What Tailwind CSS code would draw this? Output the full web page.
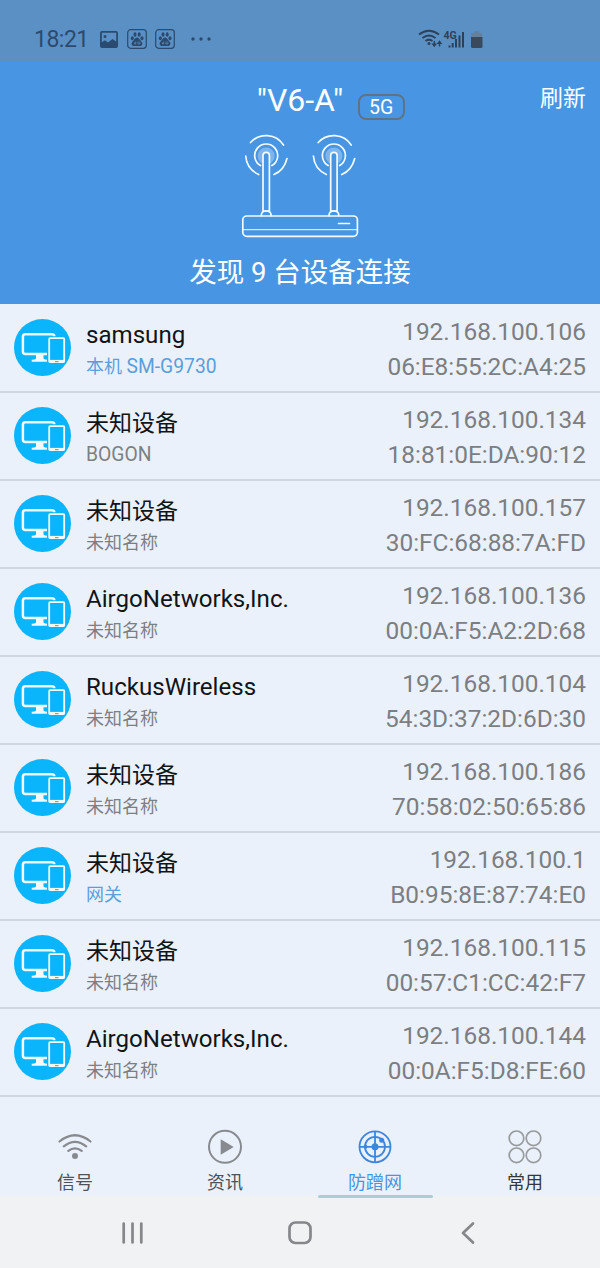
<!DOCTYPE html>
<html lang="zh-CN">
<head>
    <meta charset="UTF-8">
    <meta name="viewport" content="width=device-width, initial-scale=1.0">
    <title>防蹭网</title>
    <script src="https://cdn.jsdelivr.net/npm/@tailwindcss/browser@4"></script>
</head>
<body class="w-[600px] h-[1268px] overflow-hidden flex flex-col bg-[#eaf1fb] font-['Roboto','Noto_Sans_CJK_SC',sans-serif]">

    <!-- status bar -->
    <div class="h-[62px] shrink-0 bg-[#5b90c4] text-[#2a4b6f] flex items-center pt-4 pl-[34px] pr-[116px]">
        <span class="text-[23px] leading-6 tracking-[-0.5px] w-[66px] pt-0.5">18:21</span>
        <svg class="w-[18px] h-[17px]" viewBox="0 0 18 17"><path fill="currentColor" fill-rule="evenodd" d="M2 0h14a2 2 0 0 1 2 2v13a2 2 0 0 1-2 2H2a2 2 0 0 1-2-2V2a2 2 0 0 1 2-2zM1.800 1.800v9.500l3.200-2 3 2.200 4.500-3.500 3.700 2.500V1.800zM5 4a1.500 1.500 0 1 1 0 3 1.500 1.500 0 0 1 0-3z"/></svg>
        <svg class="w-5 h-5 ml-[9px]" viewBox="0 0 20 20"><use href="#paw"/></svg>
        <svg class="w-5 h-5 ml-2" viewBox="0 0 20 20"><use href="#paw"/></svg>
        <svg class="w-[21px] h-1 ml-4" viewBox="0 0 21 4" fill="currentColor"><circle cx="2" cy="2" r="1.700"/><circle cx="10" cy="2" r="1.700"/><circle cx="18" cy="2" r="1.700"/></svg>
        <svg class="w-[66px] h-5 ml-auto" viewBox="417 28 66 20" fill="none" stroke="#2b425c">
            <path stroke-width="2" d="M418 33.500q10-7.500 20 0M421.500 37q6.500-5 13 0M424.500 40q3.500-2.500 7 0"/>
            <circle cx="428" cy="42.500" r="1.500" fill="#2b425c" stroke="none"/>
            <path stroke-width="1.500" d="M433.300 40v4M438.500 45.500v-4"/>
            <path fill="#2b425c" stroke="none" d="M430.500 42.500h5.600l-2.800 3.800zM435.700 43h5.600l-2.800-3.800z"/>
            <path stroke-width="2" d="M448.500 46.500v-2M451.700 46.500v-4.500M455 46.500v-8.500M458.500 46.500v-12M462 46.500v-15.500"/>
            <text x="442.500" y="37.500" class="text-[10.5px] font-bold" fill="#2b425c" stroke="none">4G</text>
            <path fill="#64809b" stroke="none" d="M473 30h5v2h3v5h-11v-5h3z"/>
            <path fill="#3a4a5c" stroke="none" d="M470 36h11.500v9.500q0 1.500-1.500 1.500h-8.500q-1.500 0-1.500-1.500z"/>
        </svg>
    </div>

    <!-- header -->
    <header class="relative h-[242px] shrink-0 bg-[#4896e3] text-white flex flex-col items-center">
        <div class="relative mt-5 h-9 text-[32px] leading-9">"V6-A"
            <span class="absolute left-[101px] top-3 w-[47px] h-[26px] rounded-lg border-2 border-[#5c7488] text-[19.500px] leading-[23px] text-center">5G</span>
        </div>
        <button class="absolute right-3.5 top-[21px] text-[23px] leading-8">刷新</button>
        <svg class="w-[120px] h-[108px] mt-[13px]" viewBox="240 131 120 108" fill="none" stroke="#f3fbff" stroke-width="1.700" stroke-linecap="round">
            <use href="#antenna"/>
            <use href="#antenna" x="67.700"/>
            <rect x="242.800" y="216" width="114.600" height="20.300" rx="4"/>
            <path stroke-width="1" d="M243.500 229.700h113.500"/>
            <path d="M338.500 223.500h11"/>
        </svg>
        <div class="mt-4 text-[27.500px] leading-9 whitespace-nowrap">发现 9 台设备连接</div>
    </header>

    <!-- device list -->
    <ul id="deviceList" class="shrink-0 pt-px"></ul>

    <!-- tabs -->
    <nav class="h-[99px] shrink-0 grid grid-cols-4 pt-[31px] text-lg leading-6 text-[#4c5359] text-center">
        <div class="flex flex-col items-center">
            <svg class="w-9 h-9" viewBox="0 0 36 36" fill="none" stroke="#878b90" stroke-width="2.200" stroke-linecap="round">
                <path d="M2.500 13.500q15.500-12.500 31 0M6.800 18.300q11.200-9 22.400 0M11.300 22.800q6.700-5 13.400 0"/>
                <circle cx="18" cy="28" r="3" fill="#878b90" stroke="none"/>
            </svg>
            <span class="mt-[7px]">信号</span>
        </div>
        <div class="flex flex-col items-center">
            <svg class="w-9 h-9" viewBox="0 0 36 36" fill="none" stroke="#878b90" stroke-width="2">
                <circle cx="18" cy="18.800" r="16"/>
                <path d="M13.700 11.300v15.400l13-7.700z" fill="#878b90" stroke="none"/>
            </svg>
            <span class="mt-[7px]">资讯</span>
        </div>
        <div class="relative flex flex-col items-center text-[#4a94df]">
            <svg class="w-9 h-9" viewBox="0 0 36 36" fill="none" stroke="#3d86dc" stroke-width="1.800">
                <circle cx="18" cy="18.800" r="15.500"/>
                <circle cx="18" cy="18.800" r="10"/>
                <path d="M18 3.300v31M2.500 18.800h31"/>
                <g fill="#3d86dc" stroke="none"><circle cx="18" cy="18.800" r="3.500"/><circle cx="24.700" cy="12.300" r="2.500"/><circle cx="8.500" cy="18.800" r="2"/></g>
            </svg>
            <span class="mt-[7px]">防蹭网</span>
            <i class="absolute left-[18px] top-[67px] w-[115px] h-[3px] rounded-full bg-[#aacfd3]"></i>
        </div>
        <div class="flex flex-col items-center">
            <svg class="w-9 h-9" viewBox="0 0 36 36" fill="none" stroke="#979b9e" stroke-width="1.700">
                <circle cx="9.500" cy="10.300" r="7.300"/><circle cx="26.500" cy="10.300" r="7.300"/>
                <circle cx="9.500" cy="27.300" r="7.300"/><circle cx="26.500" cy="27.300" r="7.300"/>
            </svg>
            <span class="mt-[7px] text-[#33383c]">常用</span>
        </div>
    </nav>

    <!-- system navigation -->
    <div class="grow bg-[#f1f2f3] flex justify-center">
        <svg class="w-[360px] h-8 mt-[21px]" viewBox="120 1217 360 32" fill="none" stroke="#85878a" stroke-width="2.700" stroke-linecap="round" stroke-linejoin="round">
            <path d="M123.700 1223.500v19M132.500 1223.500v19M141.300 1223.500v19"/>
            <rect x="289.500" y="1222.500" width="21" height="20.500" rx="6"/>
            <path d="M473 1223.500l-10 9.500 10 9.500"/>
        </svg>
    </div>

    <svg class="hidden">
        <defs>
            <g id="paw">
                <rect x=".7" y=".7" width="18.600" height="18.600" rx="3" fill="none" stroke="currentColor" stroke-width="1.200"/>
                <g fill="currentColor">
                    <ellipse cx="5.300" cy="9.300" rx="1.500" ry="2"/><ellipse cx="8" cy="5.500" rx="1.500" ry="2.200"/>
                    <ellipse cx="12.200" cy="5.500" rx="1.500" ry="2.200"/><ellipse cx="15" cy="9.300" rx="1.500" ry="2"/>
                    <path d="M10 8.500c2 0 2.500 2 4 3.500 2.500 2.500 1.300 5-1 5-1.500 0-4.500 0-6 0-2.300 0-3.500-2.500-1-5 1.500-1.500 2-3.500 4-3.500z"/>
                </g>
                <path d="M8.700 12.500v2.500H7.500v-1.500M11 12.500v2.500h1.800v-2.500" fill="none" stroke="#5b90c4" stroke-width=".7"/>
            </g>
            <g id="antenna">
                <circle cx="266.200" cy="156" r="8.500" fill="#fff" fill-opacity=".3" stroke="none"/>
                <path d="M260.500 165.500a11.500 11.500 0 1 1 11.400 0"/>
                <path d="M250.500 142.500a21 21 0 0 1 33 2.500M245.700 156q1 13 13 18.500M287 158.500q-3 12-13 16"/>
                <path d="M263 211v-55.500a3.200 3.200 0 0 1 6.400 0V211z" fill="#4896e3"/>
                <path d="M261.300 215.500q0-4.500 4.900-4.500t4.900 4.500"/>
            </g>
            <g id="devices">
                <circle cx="28.500" cy="28.500" r="28.500" fill="#0bb5fc"/>
                <g fill="none" stroke="#f0faff">
                    <rect x="8.900" y="15.200" width="31.500" height="19.800" rx="2.500" stroke-width="2.500"/>
                    <path fill="#f0faff" stroke="none" d="M22 36h7.500v3.500q1 1.200 4.200 1.200v2H17.700v-2q3.300 0 4.300-1.200z"/>
                    <path fill="#0bb5fc" stroke="none" d="M33 17.200h19V44.500H33z"/>
                    <rect x="35.200" y="19.200" width="15" height="23.800" rx=".7" stroke-width="1.800"/>
                    <path stroke-width="2.600" d="M35.500 42.200h14.500"/>
                    <path stroke="#0bb5fc" stroke-width="1" d="M41 42.700h3.500"/>
                </g>
            </g>
        </defs>
    </svg>

    <script>
        const devices = [
            { name: "samsung", sub: "本机 <span class='text-[19.300px]'>SM-G9730</span>", ip: "192.168.100.106", mac: "06:E8:55:2C:A4:25", active: true },
            { name: "未知设备", sub: "<span class='text-[19.300px]'>BOGON</span>", ip: "192.168.100.134", mac: "18:81:0E:DA:90:12" },
            { name: "未知设备", sub: "未知名称", ip: "192.168.100.157", mac: "30:FC:68:88:7A:FD" },
            { name: "AirgoNetworks,Inc.", sub: "未知名称", ip: "192.168.100.136", mac: "00:0A:F5:A2:2D:68" },
            { name: "RuckusWireless", sub: "未知名称", ip: "192.168.100.104", mac: "54:3D:37:2D:6D:30" },
            { name: "未知设备", sub: "未知名称", ip: "192.168.100.186", mac: "70:58:02:50:65:86" },
            { name: "未知设备", sub: "网关", ip: "192.168.100.1", mac: "B0:95:8E:87:74:E0", active: true },
            { name: "未知设备", sub: "未知名称", ip: "192.168.100.115", mac: "00:57:C1:CC:42:F7" },
            { name: "AirgoNetworks,Inc.", sub: "未知名称", ip: "192.168.100.144", mac: "00:0A:F5:D8:FE:60" }
        ];

        document.getElementById("deviceList").innerHTML = devices.map(d => `
            <li class="h-[88px] flex pl-3.5 pr-3.5 border-b-2 border-[#cdd5de]">
                <svg class="w-[57px] h-[57px] mt-3.5 mr-[15px]" viewBox="0 0 57 57"><use href="#devices"/></svg>
                <div class="pt-[13px]">
                    <div class="${/^[A-Za-z]/.test(d.name) ? "text-[24.100px] leading-[34px]" : "text-[23px] leading-9"} h-9 text-[#111418]">${d.name}</div>
                    <div class="text-[18px] h-7 leading-[26px] ${d.active ? "text-[#5b9edc]" : "text-[#7c8084]"}">${d.sub}</div>
                </div>
                <div class="ml-auto pt-[9px] text-right text-[24.400px] leading-[35px] text-[#7b7e82]">
                    <div>${d.ip}</div>
                    <div>${d.mac}</div>
                </div>
            </li>`).join("");
    </script>
</body>
</html>
